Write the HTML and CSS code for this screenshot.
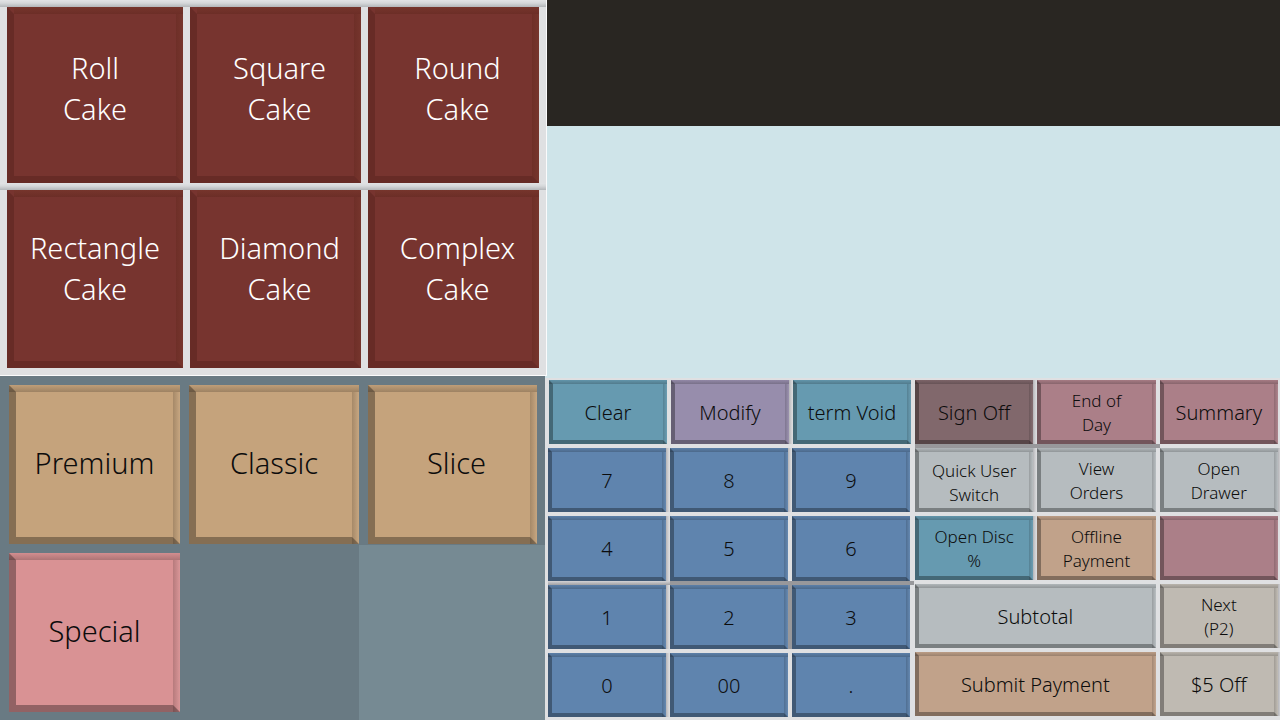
FILE: index.html
```html
<!DOCTYPE html>
<html lang="en">
<head>
<meta charset="utf-8">
<title>Cake Shop Register</title>
<link rel="stylesheet" href="styles.css">
</head>
<body>
<main class="register">
  <div class="catalog">
    <section class="shapes" aria-label="Cake shapes">
      <div class="shape-row">
        <button class="tile red">Roll<br>Cake</button>
        <button class="tile red">Square<br>Cake</button>
        <button class="tile red">Round<br>Cake</button>
      </div>
      <div class="shape-row lower">
        <button class="tile red">Rectangle<br>Cake</button>
        <button class="tile red">Diamond<br>Cake</button>
        <button class="tile red">Complex<br>Cake</button>
      </div>
    </section>
    <section class="styles" aria-label="Cake styles">
      <div class="slot"><button class="tile tan">Premium</button></div>
      <div class="slot"><button class="tile tan">Classic</button></div>
      <div class="slot last"><button class="tile tan">Slice</button></div>
      <div class="slot base"><button class="tile pink">Special</button></div>
      <div class="slot base"></div>
      <div class="slot base empty"></div>
    </section>
  </div>
  <div class="till">
    <header class="display"></header>
    <section class="order" aria-label="Order"></section>
    <section class="keys" aria-label="Keypad">
      <div class="pad numbers">
        <div class="key-row first">
          <button class="key teal">Clear</button>
          <button class="key purple shade-right">Modify</button>
          <button class="key teal">term Void</button>
        </div>
        <div class="key-row">
          <button class="key blue shade-right">7</button>
          <button class="key blue shade-right">8</button>
          <button class="key blue">9</button>
        </div>
        <div class="key-row">
          <button class="key blue shade-right">4</button>
          <button class="key blue">5</button>
          <button class="key blue">6</button>
        </div>
        <div class="key-row">
          <button class="key blue shade-right shade-top">1</button>
          <button class="key blue dark-right dark-top">2</button>
          <button class="key blue dark-top">3</button>
        </div>
        <div class="key-row">
          <button class="key blue shade-right">0</button>
          <button class="key blue">00</button>
          <button class="key blue">.</button>
        </div>
      </div>
      <div class="pad actions">
        <button class="key plum shade-right">Sign Off</button>
        <button class="key rose small">End of<br>Day</button>
        <button class="key rose">Summary</button>
        <button class="key gray small low shade-right dark-top">Quick User<br>Switch</button>
        <button class="key gray small dark-top">View<br>Orders</button>
        <button class="key gray small shade-right">Open<br>Drawer</button>
        <button class="key teal small shade-right">Open Disc<br>%</button>
        <button class="key sand small">Offline<br>Payment</button>
        <button class="key rose" aria-label="Unassigned"></button>
        <button class="key gray wide">Subtotal</button>
        <button class="key stone small shade-right">Next<br>(P2)</button>
        <button class="key sand wide">Submit Payment</button>
        <button class="key stone shade-right">$5 Off</button>
      </div>
    </section>
  </div>
</main>
</body>
</html>
```

FILE: styles.css
```css
* {
  box-sizing: border-box;
}

body {
  margin: 0;
  font-family: "Noto Sans", "Open Sans", sans-serif;
  font-weight: 300;
  color: #0c0c0c;
}

.register {
  display: grid;
  grid-template-columns: 545fr 735fr;
  min-height: 100vh;
  overflow: hidden;
}

.catalog {
  display: grid;
  grid-template-rows: 376fr 344fr;
}

/* The shape panel laps over the display beside it. */
.shapes {
  position: relative;
  display: grid;
  grid-template-rows: 183fr 192fr;
  margin-right: -2px;
  background: #dfe0e2;
  border-right: 1px solid #fbfbfc;
  border-bottom: 1px solid #fbfbfc;
}

.shape-row {
  display: grid;
  grid-template-columns: 176fr 171fr 171fr;
  column-gap: 7px;
  padding: 7px 7px 0;
  background: linear-gradient(#e2e3e5, #d6d8da 3px, #b3b6b9 7px, transparent 7px);
}

.shape-row.lower {
  padding-bottom: 7px;
}

button {
  position: relative;
  margin: 0;
  padding: 0;
  font: inherit;
  color: inherit;
  border-style: solid;
  border-radius: 0;
  border-color: transparent transparent rgba(0, 0, 0, .32) rgba(0, 0, 0, .32);
  background-color: var(--face);
  background-origin: border-box;
  background-repeat: no-repeat;
  background-image:
    linear-gradient(color-mix(in srgb, var(--face) 97%, black), color-mix(in srgb, var(--face) 80%, black)),
    linear-gradient(to right, color-mix(in srgb, var(--face) 84%, black), color-mix(in srgb, var(--face) 96%, white));
  background-position: top left, top right;
  background-size: 100% var(--bevel), var(--bevel) 100%;
}

.tile {
  --bevel: 7px;
  border-width: 7px;
  font-size: 29px;
  line-height: 41px;
  padding-bottom: 4px;
}

.shape-row .tile {
  padding-bottom: 15px;
}

.shape-row.lower .tile {
  padding-bottom: 22px;
}

.shape-row .tile + .tile {
  padding-left: 8px;
}

.red {
  --face: #77342f;
  color: #fff;
  border-color: transparent transparent #672b26 #672b26;
  background-image:
    linear-gradient(#76352c, #6c2e27),
    linear-gradient(to right, #6e2f28, #76352d);
}

.tan {
  --face: #c5a37c;
}

.pink {
  --face: #d99294;
}

.styles {
  display: grid;
  grid-template-columns: 180fr 179fr 186fr;
  grid-template-rows: 169fr 175fr;
  background: #697a83;
}

.slot {
  display: grid;
  padding: 9px 0 1px 9px;
}

.slot.last {
  padding-right: 8px;
}

.slot.last .tile {
  padding-left: 8px;
}

.slot.base {
  padding-top: 8px;
  padding-bottom: 8px;
}

.slot.empty {
  background: #768a93;
}

.till {
  display: grid;
  grid-template-rows: 126fr 252fr 342fr;
}

.display {
  background: #292622;
}

.order {
  background: #cfe4e9;
}

.keys {
  display: grid;
  grid-template-columns: 370fr 365fr;
  background: #dfe0e2;
}

.pad {
  display: grid;
  gap: 4px;
}

.numbers {
  grid-template-rows: repeat(5, 1fr);
  padding: 2px 5px 3px 3px;
}

.key-row {
  display: grid;
  grid-template-columns: repeat(3, 1fr);
  gap: 4px;
}

.key-row.first {
  margin-right: -1px;
  padding-left: 1px;
}

.actions {
  grid-template-columns: repeat(3, 1fr);
  grid-template-rows: repeat(5, 1fr);
  padding: 2px 2px 4px 0;
}

.key {
  --bevel: 4px;
  border-width: 4px;
  font-size: 20px;
  line-height: 28px;
  padding-top: 2px;
}

.key.small {
  font-size: 17px;
  line-height: 24px;
}

.key.low {
  padding-top: 6px;
}

.wide {
  grid-column: span 2;
}

.teal {
  --face: #669ab0;
}

.purple {
  --face: #978dac;
}

.blue {
  --face: #5f84ae;
}

.plum {
  --face: #81686c;
}

.rose {
  --face: #ab7f88;
}

.gray {
  --face: #b6bcbf;
}

.sand {
  --face: #c1a28a;
}

.stone {
  --face: #bfbab2;
}

/* Shadow lines in the gutters between keys. */
.shade-right::after,
.dark-right::after,
.shade-top::before,
.dark-top::before {
  content: "";
  position: absolute;
}

.shade-right::after,
.dark-right::after {
  top: -4px;
  bottom: -4px;
  right: -8px;
  width: 4px;
  background: linear-gradient(to right, #b4b4b7, #cdcdd0 50%, #dfe0e2);
}

.dark-right::after {
  background: #98989b;
}

.shade-top::before,
.dark-top::before {
  top: -8px;
  left: -4px;
  right: -8px;
  height: 4px;
  background: linear-gradient(#d2d2d5, #a0a0a3);
}

.dark-top::before {
  background: #98989b;
}
```
